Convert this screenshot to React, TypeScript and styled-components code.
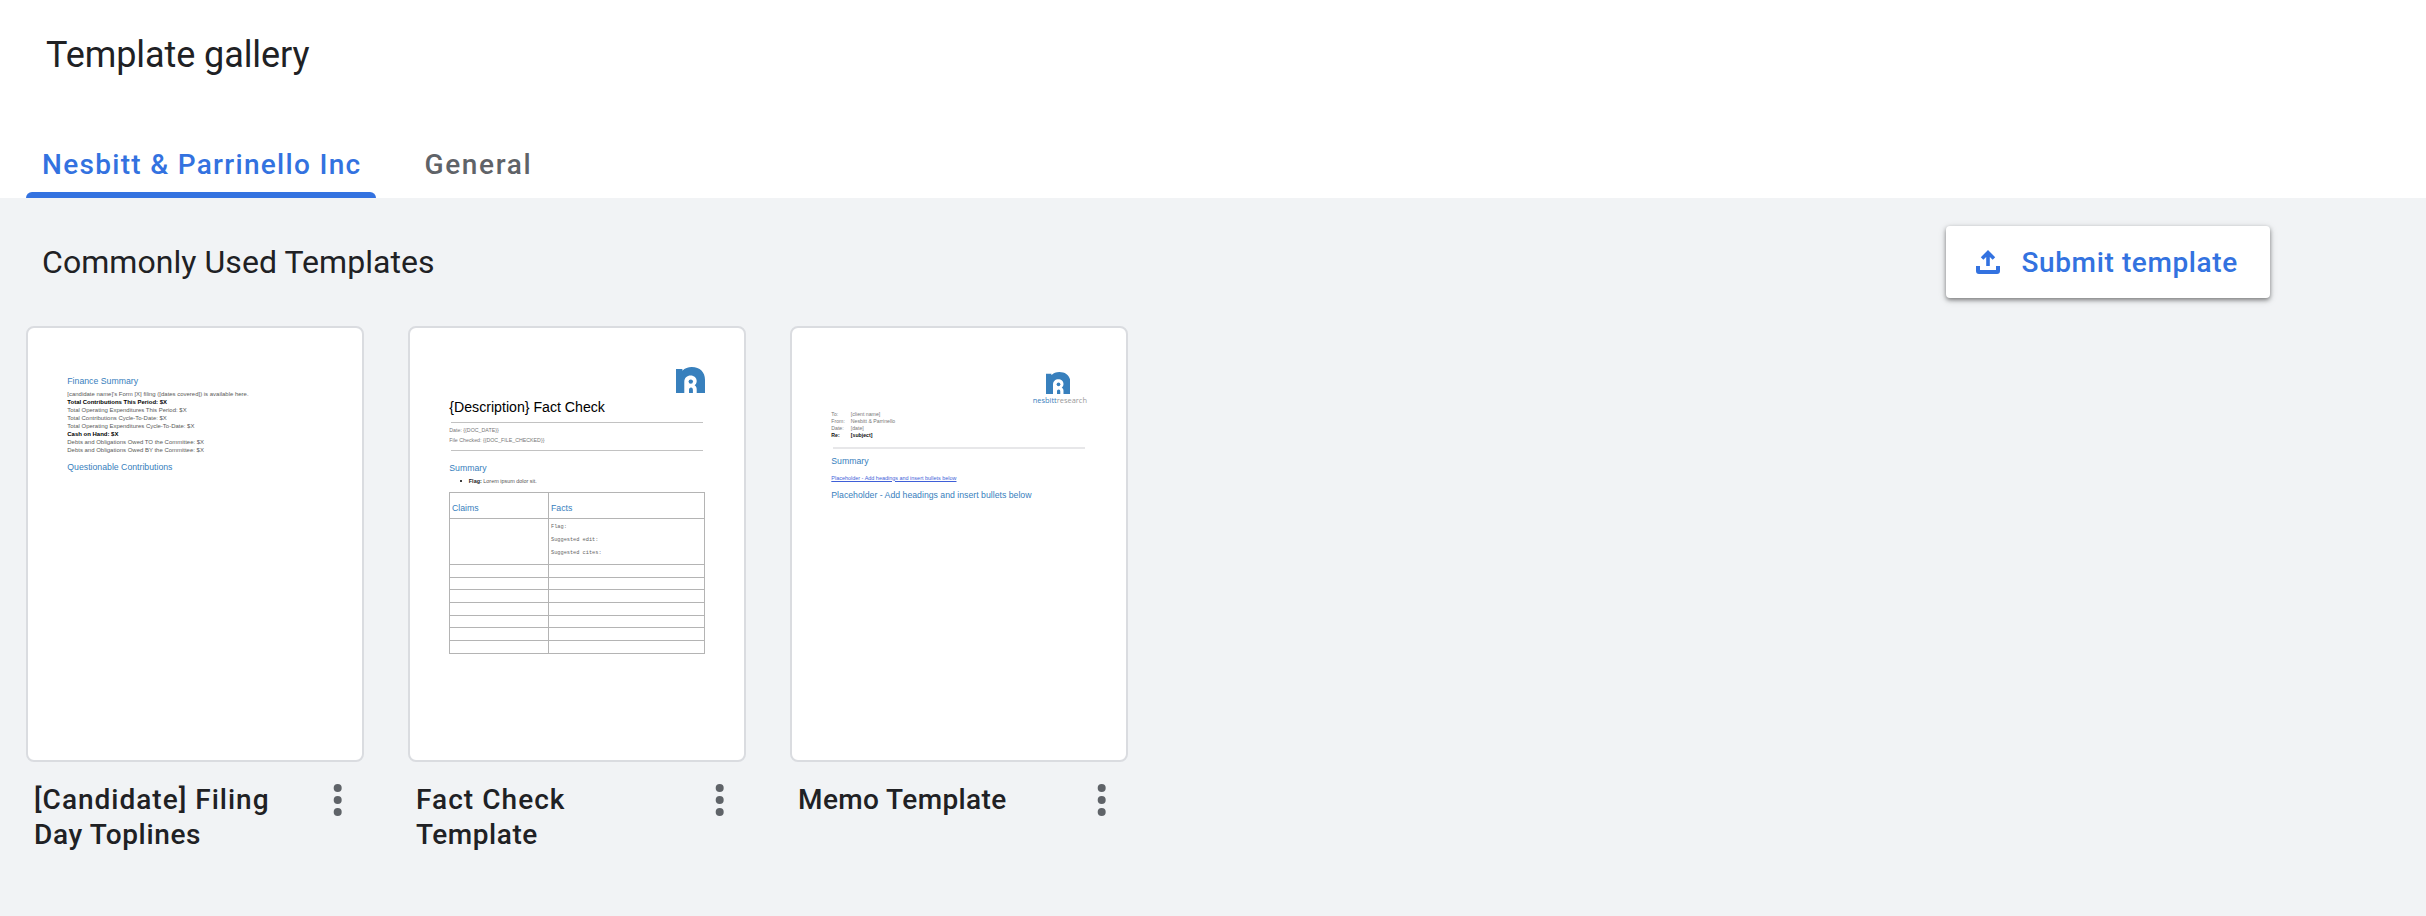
import React from 'react';
import styled, { createGlobalStyle } from 'styled-components';

const BLUE = '#3372e0';
const DOC_BLUE = '#3880bd';

const GlobalStyle = createGlobalStyle`
  *, *::before, *::after { box-sizing: border-box; }
  body { margin: 0; background: #f1f3f5; font-family: Roboto, "Liberation Sans", sans-serif; color: #202124; }
  h1, h2, h3, p { margin: 0; font-weight: 400; }
  button { font: inherit; border: 0; background: none; padding: 0; cursor: pointer; }
`;

const Page = styled.div`
  min-height: 916px;
  background: #f1f3f5;
`;

const Header = styled.header`
  display: flex;
  flex-direction: column;
  justify-content: space-between;
  height: 198px;
  padding: 35px 26px 0;
  background: #fff;
`;

const PageTitle = styled.h1`
  padding-left: 20px;
  font-size: 36px;
  line-height: 40px;
  letter-spacing: -0.08px;
`;

const TabList = styled.nav`
  display: flex;
  gap: 32px;
`;

const Tab = styled.button<{ $active?: boolean }>`
  display: flex;
  flex-direction: column;
  justify-content: space-between;
  height: 51px;
  color: ${(p) => (p.$active ? BLUE : '#5f6368')};
  font-size: 28px;
  font-weight: 500;
  line-height: 36px;
  letter-spacing: ${(p) => (p.$active ? 1.3 : 1.65)}px;
  white-space: nowrap;

  span { padding: 0 15px 0 16px; }

  &::after {
    content: '';
    width: 100%;
    height: 6px;
    border-radius: 6px 6px 0 0;
    background: ${(p) => (p.$active ? BLUE : 'transparent')};
  }
`;

const SectionBar = styled.div`
  display: flex;
  align-items: center;
  justify-content: space-between;
  padding: 28px 156px 28px 42px;
`;

const SectionTitle = styled.h2`
  font-size: 32px;
  line-height: 40px;
  letter-spacing: 0.06px;
`;

const SubmitButton = styled.button`
  display: flex;
  align-items: center;
  width: 324px;
  height: 72px;
  padding-left: 30px;
  border-radius: 4px;
  background: #fff;
  box-shadow: 0 2px 4px rgba(0, 0, 0, 0.42), 0 2px 8px rgba(0, 0, 0, 0.14);
  color: ${BLUE};
  font-size: 28px;
  font-weight: 500;
  letter-spacing: 0.62px;

  svg { margin-right: 21.5px; }
`;

const Gallery = styled.main`
  display: grid;
  grid-template-columns: repeat(3, 338px);
  gap: 44px;
  padding-left: 26px;
`;

const Sheet = styled.div`
  display: flex;
  flex-direction: column;
  height: 436px;
  padding: 0 39px 0 39.3px;
  overflow: hidden;
  border: 2px solid #dadce0;
  border-radius: 8px;
  background: #fff;
  font-family: "Liberation Sans", Arial, sans-serif;
`;

const Caption = styled.div`
  display: flex;
  justify-content: space-between;
  padding: 20px 14px 0 8px;
`;

const CaptionText = styled.h3`
  font-size: 28px;
  font-weight: 500;
  line-height: 35px;
`;

const CaptionLine = styled.span<{ $tracking: number }>`
  display: block;
  letter-spacing: ${(p) => p.$tracking}px;
`;

const MenuButton = styled.button`
  display: flex;
  width: 24px;
  height: 32px;
  margin-top: 2px;
`;

const DocHeading = styled.p<{ $top: number }>`
  margin-top: ${(p) => p.$top}px;
  color: ${DOC_BLUE};
  font-size: 8.73px;
  line-height: 12px;
  white-space: nowrap;
`;

const DocTitle = styled.p`
  margin-top: 5px;
  color: #000;
  font-size: 14.15px;
  line-height: 18px;
`;

const FinanceLines = styled.div`
  margin-top: 3px;
  color: #5a5a5a;
  font-size: 5.97px;
  line-height: 8px;
  white-space: nowrap;

  strong { color: #000; }
`;

const FieldLines = styled.div`
  margin-top: 2px;
  color: #777;
  font-size: 5.28px;
  line-height: 10px;
`;

const Rule = styled.div<{ $top: number; $thick?: boolean }>`
  flex: none;
  height: ${(p) => (p.$thick ? 2 : 1)}px;
  margin: ${(p) => p.$top}px 2px 0;
  background: ${(p) => (p.$thick ? '#e7e7e9' : '#c2c2c2')};
`;

const Bullet = styled.p`
  display: flex;
  align-items: center;
  gap: 7px;
  margin-top: 3px;
  padding-left: 10.5px;
  color: #555;
  font-size: 5.45px;
  line-height: 8px;

  &::before {
    content: '';
    width: 2px;
    height: 2px;
    border-radius: 50%;
    background: #000;
  }

  strong { color: #222; }
`;

const Table = styled.div`
  margin: 7px 0 0 -0.3px;
  border: solid #b4b4b4;
  border-width: 0 1px 1px;
`;

const TableRow = styled.div<{ $height: number }>`
  display: grid;
  grid-template-columns: 98px 1fr;
  height: ${(p) => p.$height}px;
  border-top: 1px solid #b4b4b4;
`;

const Cell = styled.div`
  padding-left: 2px;

  & + & { border-left: 1px solid #b4b4b4; }
`;

const Notes = styled.div`
  padding-top: 2px;
  color: #666;
  font-family: "Liberation Mono", monospace;
  font-size: 5.28px;
  line-height: 13px;
`;

const HeaderLogo = styled.div`
  display: flex;
  justify-content: flex-end;
  padding-top: 39px;
`;

const Brand = styled.div`
  display: flex;
  flex-direction: column;
  align-items: center;
  align-self: flex-end;
  padding-top: 44px;
  color: #999;
  font-family: "Open Sans", sans-serif;
  font-size: 7.45px;
  line-height: 10px;

  svg { margin: 0 4px 1px 0; }
  em { color: ${DOC_BLUE}; font-style: normal; }
`;

const Memo = styled.dl`
  display: grid;
  grid-template-columns: 19.5px 1fr;
  margin: 5.5px 0 0;
  color: #777;
  font-size: 5.2px;
  line-height: 7.33px;

  dt, dd { margin: 0; }
  dt:last-of-type, dd:last-of-type { color: #111; font-weight: 700; }
`;

const DocLink = styled.p`
  margin-top: 6.5px;
  color: #3f5fd8;
  font-size: 5.46px;
  line-height: 8px;
  text-decoration: underline;
  text-decoration-thickness: 0.5px;
  white-space: nowrap;
`;

const Logo = ({ width, height }: { width: number; height: number }) => (
  <svg width={width} height={height} viewBox="0 0 29 26" preserveAspectRatio="none">
    <path fill={DOC_BLUE} d="M0 2h6.4v1.8C8.8 1.2 12 0 15.8 0 24 0 29 5.200 29 12.800V26H0z" />
    <path fill="#fff" d="M8.300 26V14.800c0-3.900 2.700-6.300 6.300-6.300 3.500 0 6.100 2.300 6.100 5.600 0 1.900-.8 3.300-2.100 4.200 1.500.9 2.100 2.200 2.100 4V26h-3.800v-3c0-1.500-.6-2.400-1.900-2.400-1.300 0-2 .9-2 2.400v3z" />
    <circle cx="14.800" cy="14.600" r="2.200" fill={DOC_BLUE} />
  </svg>
);

const UploadIcon = () => (
  <svg width="24" height="24" viewBox="0 0 24 24" fill={BLUE}>
    <path d="M12 0l7.200 7.200-2.500 2.600-2.900-2.900V16h-3.600V6.900L7.300 9.800 4.800 7.200z" />
    <path d="M0 16h4v4h16v-4h4v5a3 3 0 0 1-3 3H3a3 3 0 0 1-3-3z" />
  </svg>
);

const More = () => (
  <MenuButton aria-label="More actions">
    <svg width="24" height="32" viewBox="0 0 24 32" fill="#5f6368">
      <circle cx="11.700" cy="4" r="4" />
      <circle cx="11.700" cy="16" r="4" />
      <circle cx="11.700" cy="28" r="4" />
    </svg>
  </MenuButton>
);

const FinanceDoc = () => (
  <Sheet>
    <DocHeading $top={47}>Finance Summary</DocHeading>
    <FinanceLines>
      <div>[candidate name]'s Form [X] filing ([dates covered]) is available here.</div>
      <div><strong>Total Contributions This Period: $X</strong></div>
      <div>Total Operating Expenditures This Period: $X</div>
      <div>Total Contributions Cycle-To-Date: $X</div>
      <div>Total Operating Expenditures Cycle-To-Date: $X</div>
      <div><strong>Cash on Hand: $X</strong></div>
      <div>Debts and Obligations Owed TO the Committee: $X</div>
      <div>Debts and Obligations Owed BY the Committee: $X</div>
    </FinanceLines>
    <DocHeading $top={7}>Questionable Contributions</DocHeading>
  </Sheet>
);

const EMPTY_ROWS = [13, 12, 13, 13, 12, 13, 13];

const FactCheckDoc = () => (
  <Sheet>
    <HeaderLogo><Logo width={29} height={26} /></HeaderLogo>
    <DocTitle>{'{Description} Fact Check'}</DocTitle>
    <Rule $top={6} />
    <FieldLines>
      <div>{'Date: {{DOC_DATE}}'}</div>
      <div>{'File Checked: {{DOC_FILE_CHECKED}}'}</div>
    </FieldLines>
    <Rule $top={5} />
    <DocHeading $top={11}>Summary</DocHeading>
    <Bullet><span><strong>Flag:</strong> Lorem ipsum dolor sit.</span></Bullet>
    <Table>
      <TableRow $height={26}>
        <Cell><DocHeading $top={9}>Claims</DocHeading></Cell>
        <Cell><DocHeading $top={9}>Facts</DocHeading></Cell>
      </TableRow>
      <TableRow $height={46}>
        <Cell />
        <Cell>
          <Notes>
            <div>Flag:</div>
            <div>Suggested edit:</div>
            <div>Suggested cites:</div>
          </Notes>
        </Cell>
      </TableRow>
      {EMPTY_ROWS.map((height, i) => (
        <TableRow key={i} $height={height}><Cell /><Cell /></TableRow>
      ))}
    </Table>
  </Sheet>
);

const MemoDoc = () => (
  <Sheet>
    <Brand>
      <Logo width={24.5} height={22} />
      <span><em>nesbitt</em>research</span>
    </Brand>
    <Memo>
      <dt>To:</dt><dd>[client name]</dd>
      <dt>From:</dt><dd>Nesbitt &amp; Parrinello</dd>
      <dt>Date:</dt><dd>[date]</dd>
      <dt>Re:</dt><dd>[subject]</dd>
    </Memo>
    <Rule $top={6.7} $thick />
    <DocHeading $top={6.5}>Summary</DocHeading>
    <DocLink>Placeholder - Add headings and insert bullets below</DocLink>
    <DocHeading $top={7}>Placeholder - Add headings and insert bullets below</DocHeading>
  </Sheet>
);

const TEMPLATES: { doc: React.FC; lines: [string, number][] }[] = [
  { doc: FinanceDoc, lines: [['[Candidate] Filing', 1], ['Day Toplines', 0.66]] },
  { doc: FactCheckDoc, lines: [['Fact Check', 1.05], ['Template', 0.55]] },
  { doc: MemoDoc, lines: [['Memo Template', 0.4]] },
];

export default function App() {
  return (
    <Page>
      <GlobalStyle />
      <Header>
        <PageTitle>Template gallery</PageTitle>
        <TabList>
          <Tab $active><span>Nesbitt &amp; Parrinello Inc</span></Tab>
          <Tab><span>General</span></Tab>
        </TabList>
      </Header>
      <SectionBar>
        <SectionTitle>Commonly Used Templates</SectionTitle>
        <SubmitButton><UploadIcon />Submit template</SubmitButton>
      </SectionBar>
      <Gallery>
        {TEMPLATES.map(({ doc: Doc, lines }) => (
          <article key={lines[0][0]}>
            <Doc />
            <Caption>
              <CaptionText>
                {lines.map(([text, tracking]) => (
                  <CaptionLine key={text} $tracking={tracking}>{text}</CaptionLine>
                ))}
              </CaptionText>
              <More />
            </Caption>
          </article>
        ))}
      </Gallery>
    </Page>
  );
}
